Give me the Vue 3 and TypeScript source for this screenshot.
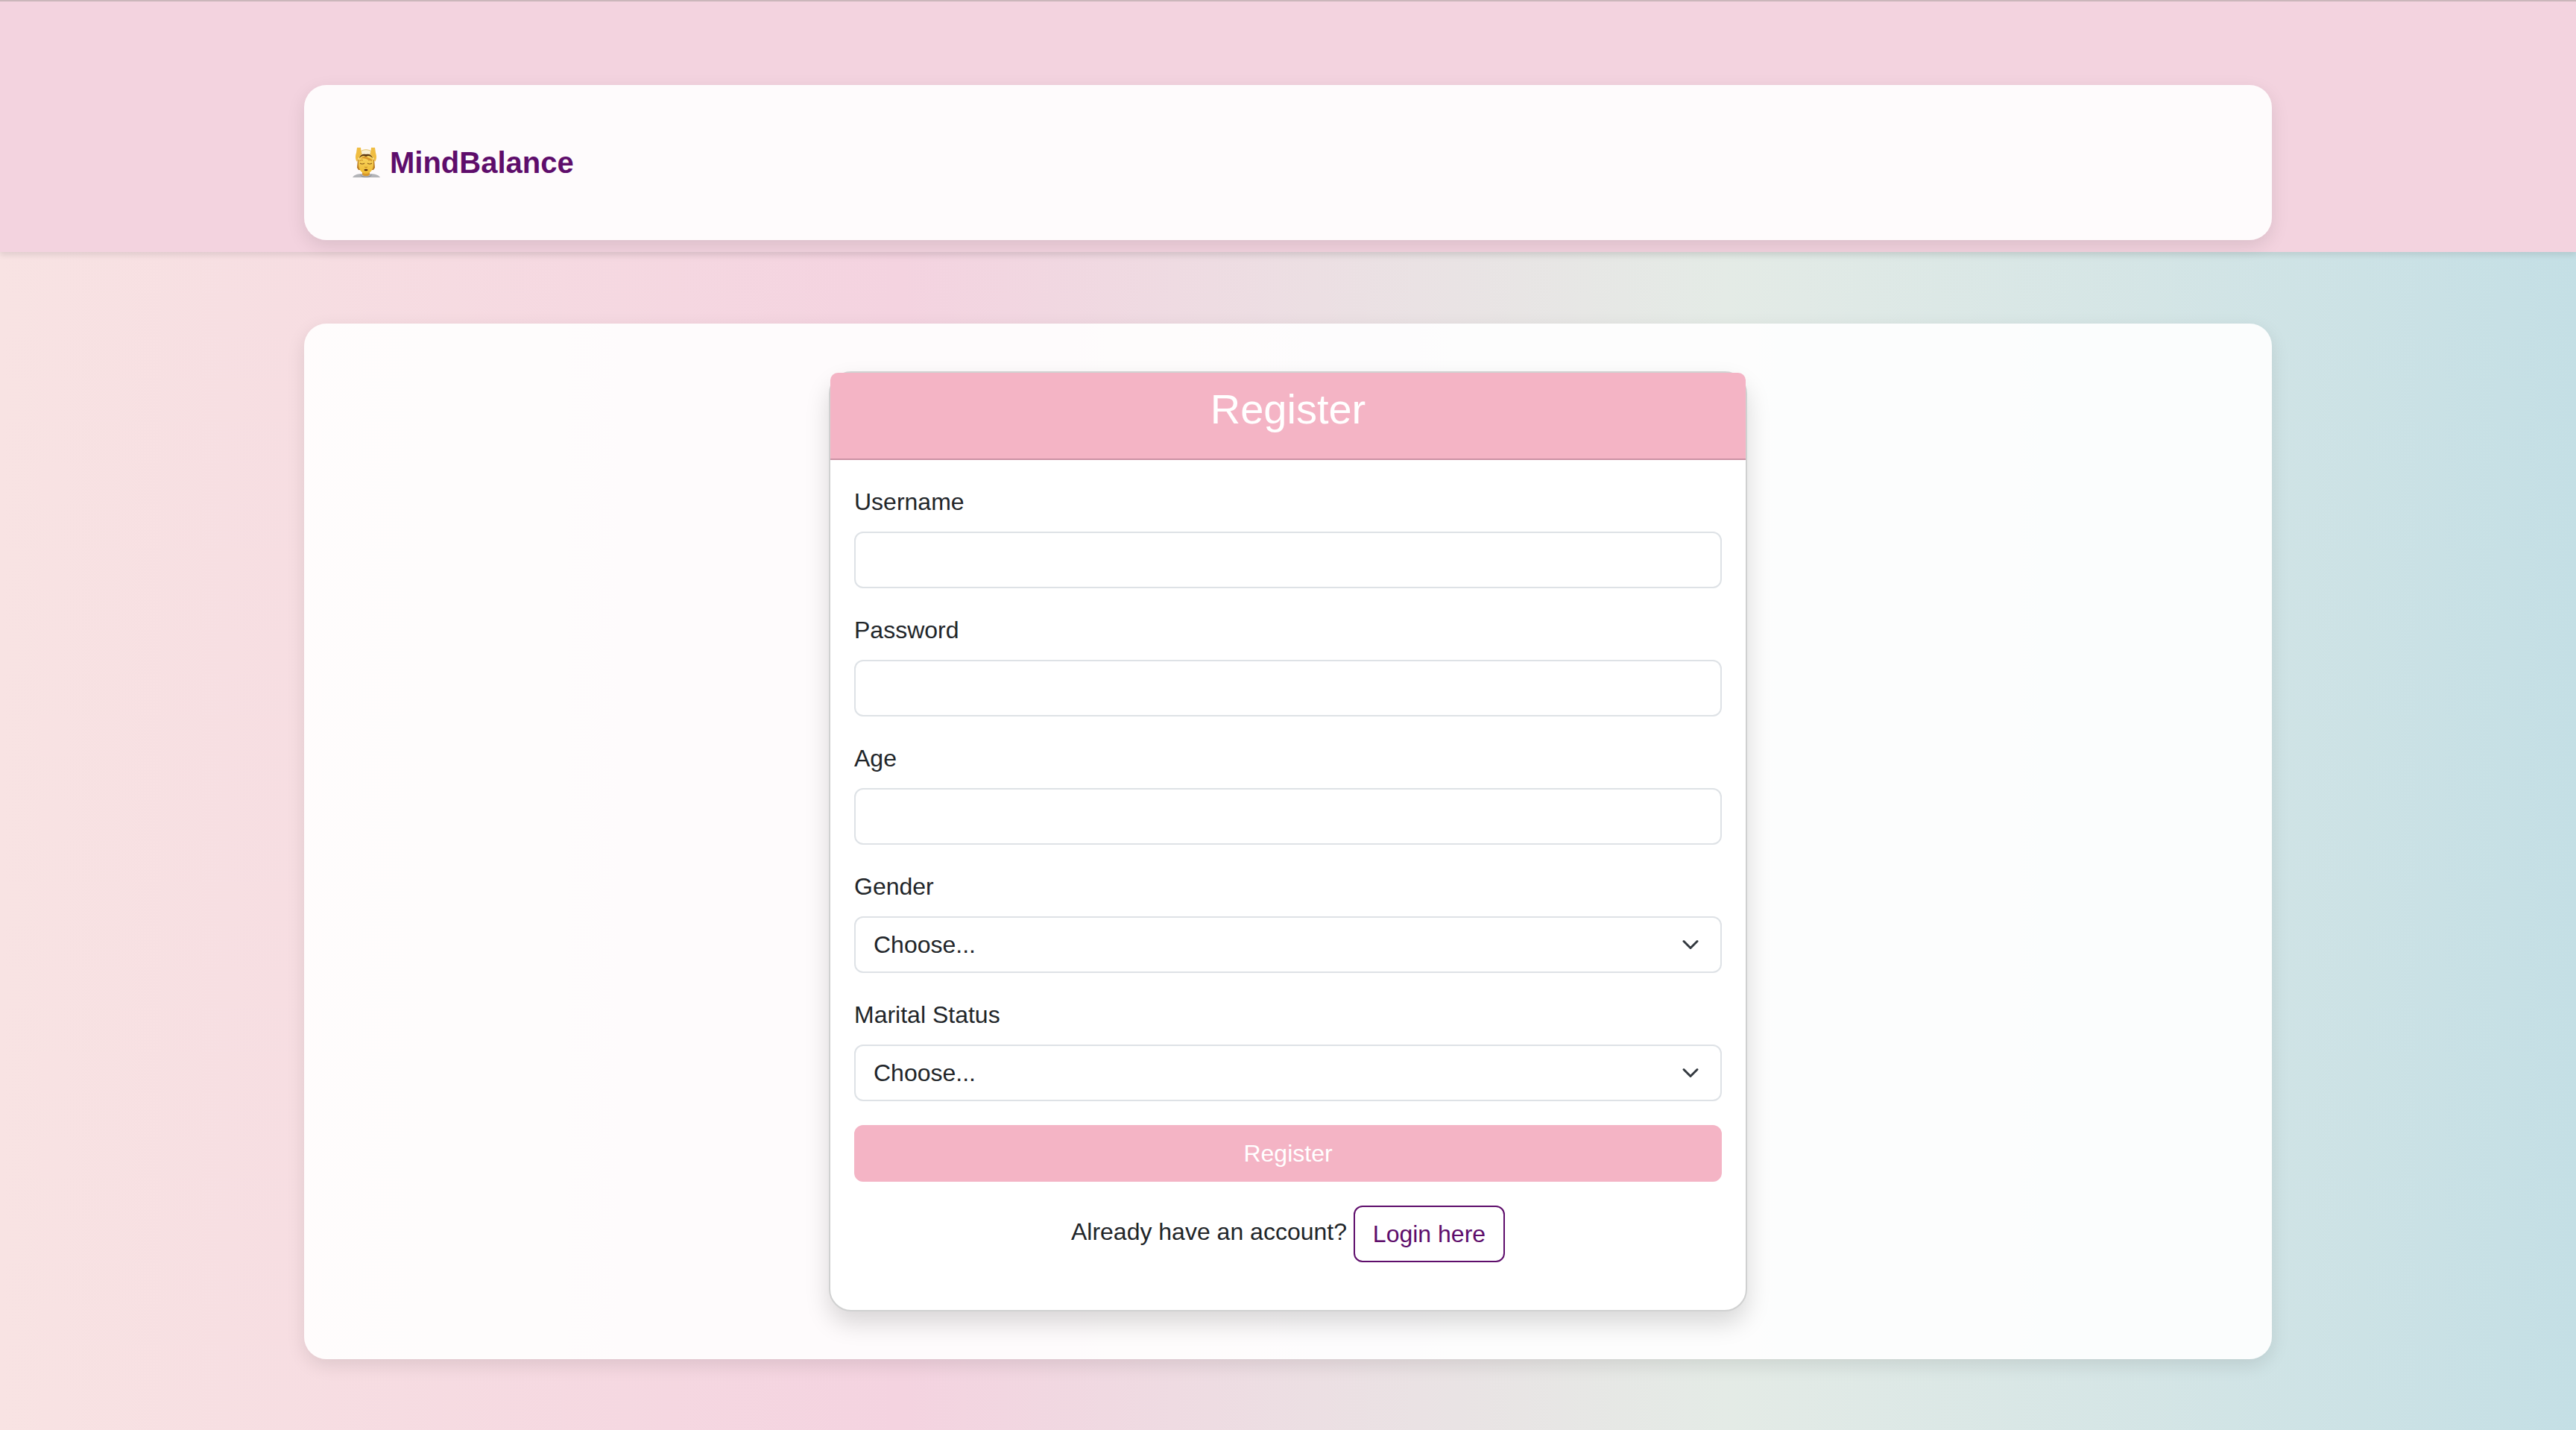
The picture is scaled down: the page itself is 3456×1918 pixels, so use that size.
<script setup lang="ts">
import { reactive } from 'vue'

interface TextField {
  id: 'username' | 'password' | 'age'
  label: string
  type: string
}

interface ChoiceField {
  id: 'gender' | 'marital'
  label: string
  options: string[]
}

const textFields: TextField[] = [
  { id: 'username', label: 'Username', type: 'text' },
  { id: 'password', label: 'Password', type: 'password' },
  { id: 'age', label: 'Age', type: 'number' },
]

const choiceFields: ChoiceField[] = [
  { id: 'gender', label: 'Gender', options: ['Female', 'Male', 'Other'] },
  { id: 'marital', label: 'Marital Status', options: ['Single', 'Married', 'Divorced', 'Widowed'] },
]

const form = reactive({ username: '', password: '', age: '', gender: '', marital: '' })
</script>

<template>
  <div class="page">
    <header class="topbar">
      <nav class="container">
        <a class="brand" href="#">
          <svg class="brand-icon" viewBox="0 0 40 40" aria-hidden="true">
            <defs>
              <linearGradient id="skin" x1="0" y1="0" x2="0" y2="1">
                <stop offset="0" stop-color="#f9d865" />
                <stop offset="1" stop-color="#f0bb35" />
              </linearGradient>
            </defs>
            <path d="M1 40c2-4 8-5 13-5h10c5 0 12 1 14 5z" fill="#b3b4b8" />
            <path d="M11 36c4 4 12 4 16 0l-1 2c-4 3-10 3-14 0z" fill="#8d8f96" />
            <path d="M14 31h10v5c-2 3-8 3-10 0z" fill="#d9982a" />
            <path d="M8 16h22l1 11-2 3H9l-2-3z" fill="#b97a20" />
            <path d="M9 17c0-6 4-9 10-9s10 3 10 9v6c0 7-5 12-10 12S9 30 9 23z" fill="url(#skin)" />
            <path d="M12 5c4-3 10-3 14 0l-2 5H14z" fill="#f9efd0" stroke="#e3c36d" />
            <path d="M10 14c1-5 6-6 9-5 4-1 8 1 9 5-2-2-4-3-6-3l-3 1-3-1c-2 0-4 1-6 3z" fill="#5f3b10" />
            <path d="M12 15c2-3 6-4 9-2s5 1 7 4c-4-1-6 0-9-2-3-1-5-1-7 0z" fill="#d9952a" />
            <path d="M7 0h5l1 9-4 5-2 5c-3-4-2-9-1-12z" fill="#f0bd42" />
            <path d="M31 0h-5l-1 9 4 5 2 5c3-4 2-9 1-12z" fill="#f0bd42" />
            <path d="M10 18q3-2 5-1M22 17q3-1 5 1" fill="none" stroke="#c98a22" />
            <path d="M11 21q3 2 6 0M21 21q3 2 6 0" fill="none" stroke="#8a5a18" stroke-width="1.2" />
            <path d="M17 26q2 1 4 0" fill="none" stroke="#c78a23" />
            <ellipse cx="19" cy="30" rx="2.5" ry="1.3" fill="#5c2d0c" />
          </svg>
          <span>MindBalance</span>
        </a>
      </nav>
    </header>

    <main class="container">
      <section class="card">
        <div class="card-header">
          <h2>Register</h2>
        </div>
        <form class="card-body" @submit.prevent>
          <div v-for="field in textFields" :key="field.id" class="field">
            <label :for="field.id">{{ field.label }}</label>
            <input :id="field.id" v-model="form[field.id]" class="control" :type="field.type" />
          </div>
          <div v-for="field in choiceFields" :key="field.id" class="field">
            <label :for="field.id">{{ field.label }}</label>
            <select :id="field.id" v-model="form[field.id]" class="control select">
              <option value="">Choose...</option>
              <option v-for="option in field.options" :key="option" :value="option">{{ option }}</option>
            </select>
          </div>
          <button class="btn btn-primary" type="submit">Register</button>
          <p class="login">Already have an account? <a class="btn btn-outline" href="#">Login here</a></p>
        </form>
      </section>
    </main>
  </div>
</template>

<style>
body {
  margin: 0;
  background: #f3d3df;
}
</style>

<style scoped>
.page,
.page * {
  box-sizing: border-box;
}

.page {
  min-height: 100vh;
  overflow: hidden;
  padding-bottom: 96px;
  background: linear-gradient(to right, #f8e3e3, #f4d3e0 35%, #e4ebe6 67%, #c4dfe5);
  color: #212529;
  font-family: "Liberation Sans", Arial, Helvetica, sans-serif;
  font-size: 32px;
  line-height: 48px;
}

.topbar {
  display: flow-root;
  padding-bottom: 16px;
  border-top: 2px solid #cab6ba;
  background: #f3d3df;
  box-shadow: 0 4px 8px rgba(0, 0, 0, 0.1);
}

.topbar .container {
  display: flex;
  margin-top: 112px;
}

.container {
  max-width: 2640px;
  margin: 96px auto 0;
  padding: 64px;
  border-radius: 30px;
  background: rgba(255, 255, 255, 0.9);
  box-shadow: 0 8px 24px rgba(0, 0, 0, 0.1);
}

.brand {
  display: inline-flex;
  align-items: center;
  gap: 11px;
  padding: 10px 0;
  color: #5e0d6b;
  font-size: 40px;
  font-weight: 700;
  line-height: 60px;
  text-decoration: none;
}

.brand-icon {
  width: 40px;
  height: 40px;
}

.card {
  max-width: 1232px;
  margin: 0 auto;
  border: 2px solid #d0d1d1;
  border-radius: 30px;
  background: #fff;
  box-shadow: 0 16px 32px rgba(0, 0, 0, 0.15);
}

.card-header {
  padding: 16px 32px 34px;
  border-bottom: 2px solid #cb91a3;
  border-radius: 10px 10px 0 0;
  background: #f4b4c5;
  color: #fff;
  text-align: center;
}

.card-header h2 {
  margin: 0;
  font-size: 56px;
  font-weight: 400;
  line-height: 65px;
}

.card-body {
  padding: 32px;
}

.field {
  margin-bottom: 32px;
}

.field label {
  display: block;
  margin-bottom: 16px;
}

.control {
  display: block;
  width: 100%;
  height: 76px;
  padding: 12px 24px;
  border: 2px solid #dee2e6;
  border-radius: 12px;
  background-color: #fff;
  color: inherit;
  font: inherit;
}

.select {
  appearance: none;
  padding-right: 72px;
  background-image: url("data:image/svg+xml,%3csvg xmlns='http://www.w3.org/2000/svg' viewBox='0 0 16 16'%3e%3cpath fill='none' stroke='%23343a40' stroke-linecap='round' stroke-linejoin='round' stroke-width='2' d='m2 5 6 6 6-6'/%3e%3c/svg%3e");
  background-repeat: no-repeat;
  background-position: right 24px center;
  background-size: 32px 24px;
}

.btn {
  display: inline-block;
  padding: 12px 24px;
  border: 2px solid transparent;
  border-radius: 12px;
  font: inherit;
  text-align: center;
  text-decoration: none;
  vertical-align: middle;
  cursor: pointer;
}

.btn-primary {
  width: 100%;
  border-color: #f4b4c5;
  background: #f4b4c5;
  color: #fff;
}

.btn-outline {
  border-color: #5e0d6b;
  color: #5e0d6b;
}

.login {
  margin: 32px 0;
  text-align: center;
}
</style>
